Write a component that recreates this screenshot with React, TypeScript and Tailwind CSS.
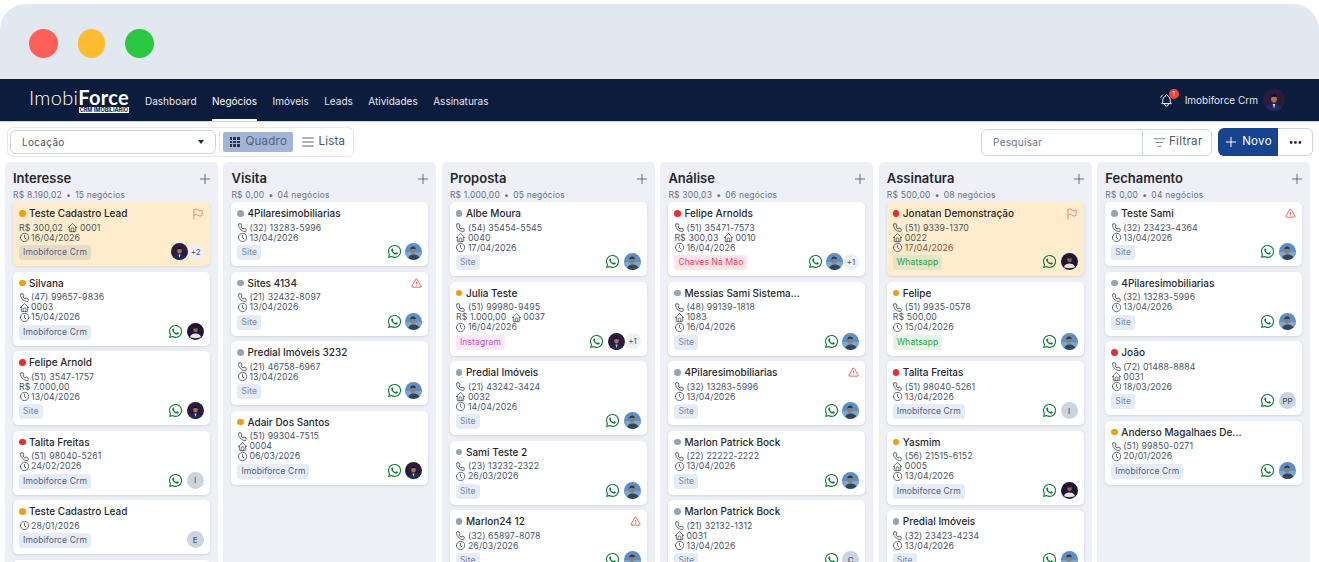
import React from 'react'
import { ListFilter } from 'lucide-react'
import { TbAlertTriangle, TbBellRinging, TbClock, TbDots, TbFlag, TbHome, TbMenu2, TbPhone, TbPlus } from 'react-icons/tb'
import { FaWhatsapp } from 'react-icons/fa'

type AvatarKind = 'man' | 'dark' | 'photo' | string

type Deal = {
  name: string
  dot: 'orange' | 'red' | 'gray'
  phone?: string
  value?: string
  code?: string
  date: string
  dateRed?: boolean
  tag: string
  hl?: boolean
  flag?: boolean
  alert?: boolean
  wa?: boolean
  avatar: AvatarKind
  extra?: string
}

type Column = { title: string; total: string; count: string; deals: Deal[] }

const columns: Column[] = [
  {
    title: 'Interesse',
    total: 'R$ 8.190,02',
    count: '15 negócios',
    deals: [
      { name: 'Teste Cadastro Lead', dot: 'orange', value: 'R$ 300,02', code: '0001', date: '16/04/2026', tag: 'Imobiforce Crm', hl: true, flag: true, avatar: 'man', extra: '+2' },
      { name: 'Silvana', dot: 'orange', phone: '(47) 99657-9836', code: '0003', date: '15/04/2026', tag: 'Imobiforce Crm', wa: true, avatar: 'dark' },
      { name: 'Felipe Arnold', dot: 'red', phone: '(51) 3547-1757', value: 'R$ 7.000,00', date: '13/04/2026', tag: 'Site', wa: true, avatar: 'man' },
      { name: 'Talita Freitas', dot: 'red', phone: '(51) 98040-5261', date: '24/02/2026', tag: 'Imobiforce Crm', wa: true, avatar: 'I' },
      { name: 'Teste Cadastro Lead', dot: 'orange', date: '28/01/2026', tag: 'Imobiforce Crm', avatar: 'E' },
      { name: '', dot: 'orange', date: '28/01/2026', tag: 'Site', avatar: 'E' },
    ],
  },
  {
    title: 'Visita',
    total: 'R$ 0,00',
    count: '04 negócios',
    deals: [
      { name: '4Pilaresimobiliarias', dot: 'gray', phone: '(32) 13283-5996', date: '13/04/2026', tag: 'Site', wa: true, avatar: 'photo' },
      { name: 'Sites 4134', dot: 'gray', phone: '(21) 32432-8097', date: '13/04/2026', tag: 'Site', alert: true, wa: true, avatar: 'photo' },
      { name: 'Predial Imóveis 3232', dot: 'gray', phone: '(21) 46758-6967', date: '13/04/2026', tag: 'Site', wa: true, avatar: 'photo' },
      { name: 'Adair Dos Santos', dot: 'orange', phone: '(51) 99304-7515', code: '0004', date: '06/03/2026', tag: 'Imobiforce Crm', wa: true, avatar: 'man' },
    ],
  },
  {
    title: 'Proposta',
    total: 'R$ 1.000,00',
    count: '05 negócios',
    deals: [
      { name: 'Albe Moura', dot: 'gray', phone: '(54) 35454-5545', code: '0040', date: '17/04/2026', tag: 'Site', wa: true, avatar: 'photo' },
      { name: 'Julia Teste', dot: 'orange', phone: '(51) 99980-9495', value: 'R$ 1.000,00', code: '0037', date: '16/04/2026', tag: 'Instagram', wa: true, avatar: 'man', extra: '+1' },
      { name: 'Predial Imóveis', dot: 'gray', phone: '(21) 43242-3424', code: '0032', date: '14/04/2026', tag: 'Site', wa: true, avatar: 'photo' },
      { name: 'Sami Teste 2', dot: 'gray', phone: '(23) 13232-2322', date: '26/03/2026', tag: 'Site', wa: true, avatar: 'photo' },
      { name: 'Marlon24 12', dot: 'gray', phone: '(32) 65897-8078', date: '26/03/2026', tag: 'Site', alert: true, wa: true, avatar: 'photo' },
    ],
  },
  {
    title: 'Análise',
    total: 'R$ 300,03',
    count: '06 negócios',
    deals: [
      { name: 'Felipe Arnolds', dot: 'red', phone: '(51) 35471-7573', value: 'R$ 300,03', code: '0010', date: '16/04/2026', tag: 'Chaves Na Mão', wa: true, avatar: 'photo', extra: '+1' },
      { name: 'Messias Sami Sistema...', dot: 'gray', phone: '(48) 99139-1818', code: '1083', date: '16/04/2026', tag: 'Site', wa: true, avatar: 'photo' },
      { name: '4Pilaresimobiliarias', dot: 'gray', phone: '(32) 13283-5996', date: '13/04/2026', tag: 'Site', alert: true, wa: true, avatar: 'photo' },
      { name: 'Marlon Patrick Bock', dot: 'gray', phone: '(22) 22222-2222', date: '13/04/2026', tag: 'Site', wa: true, avatar: 'photo' },
      { name: 'Marlon Patrick Bock', dot: 'gray', phone: '(21) 32132-1312', code: '0031', date: '13/04/2026', tag: 'Site', wa: true, avatar: 'C' },
    ],
  },
  {
    title: 'Assinatura',
    total: 'R$ 500,00',
    count: '08 negócios',
    deals: [
      { name: 'Jonatan Demonstração', dot: 'red', phone: '(51) 9339-1370', code: '0022', date: '17/04/2026', dateRed: true, tag: 'Whatsapp', hl: true, flag: true, wa: true, avatar: 'dark' },
      { name: 'Felipe', dot: 'orange', phone: '(51) 9935-0578', value: 'R$ 500,00', date: '15/04/2026', tag: 'Whatsapp', wa: true, avatar: 'photo' },
      { name: 'Talita Freitas', dot: 'red', phone: '(51) 98040-5261', date: '13/04/2026', tag: 'Imobiforce Crm', wa: true, avatar: 'I' },
      { name: 'Yasmim', dot: 'orange', phone: '(56) 21515-6152', code: '0005', date: '13/04/2026', tag: 'Imobiforce Crm', wa: true, avatar: 'dark' },
      { name: 'Predial Imóveis', dot: 'gray', phone: '(32) 23423-4234', date: '13/04/2026', tag: 'Site', wa: true, avatar: 'photo' },
    ],
  },
  {
    title: 'Fechamento',
    total: 'R$ 0,00',
    count: '04 negócios',
    deals: [
      { name: 'Teste Sami', dot: 'gray', phone: '(32) 23423-4364', date: '13/04/2026', tag: 'Site', alert: true, wa: true, avatar: 'photo' },
      { name: '4Pilaresimobiliarias', dot: 'gray', phone: '(32) 13283-5996', date: '13/04/2026', tag: 'Site', wa: true, avatar: 'photo' },
      { name: 'João', dot: 'red', phone: '(72) 01488-8884', code: '0031', date: '18/03/2026', tag: 'Site', wa: true, avatar: 'PP' },
      { name: 'Anderso Magalhaes De...', dot: 'orange', phone: '(51) 99850-0271', date: '20/01/2026', tag: 'Imobiforce Crm', wa: true, avatar: 'photo' },
    ],
  },
]

const dotClass = {
  orange: 'bg-[#f59e0b]',
  red: 'bg-[#ef2a2a]',
  gray: 'bg-[#94a3b8]',
}

function tagClass(tag: string, hl?: boolean) {
  if (tag === 'Whatsapp') return hl ? 'bg-[#e2e6c4] text-[#2f9e44]' : 'bg-[#e4f4e4] text-[#2f9e44]'
  if (tag === 'Instagram') return 'bg-[#fbe9f8] text-[#c84fc0]'
  if (tag === 'Chaves Na Mão') return 'bg-[#ffe4e8] text-[#f43f5e]'
  if (tag === 'Site') return 'bg-[#e7ecf4] text-[#6f88b3]'
  return hl ? 'bg-[#e6dcc6] text-[#4a6088]' : 'bg-[#e7ecf4] text-[#4a6088]'
}

// avatars are little drawings since there is no photo to use
function Avatar({ kind, size = 'w-[17px] h-[17px]' }: { kind: AvatarKind; size?: string }) {
  if (kind === 'man') {
    return (
      <svg viewBox="0 0 17 17" className={`${size} rounded-full shrink-0`}>
        <rect width="17" height="17" fill="#2b1c3d" />
        <path d="M2 17c0-4 3-5.5 6.5-5.5S15 13 15 17z" fill="#1d2a5c" />
        <path d="M7.5 11.5h2L8.5 15z" fill="#d9d4d4" />
        <ellipse cx="8.5" cy="7.5" rx="2.3" ry="3" fill="#a8705a" />
        <path d="M6.1 6.5c0-2 1-2.6 2.4-2.6s2.4.6 2.4 2.6c-1.5-.8-3.3-.8-4.8 0z" fill="#15101c" />
      </svg>
    )
  }
  if (kind === 'dark') {
    return (
      <svg viewBox="0 0 17 17" className={`${size} rounded-full shrink-0`}>
        <rect width="17" height="17" fill="#1f1636" />
        <path d="M3 14c1-3 3-3.5 5.5-3.5S13 11 14 14c-2 1.5-9 1.5-11 0z" fill="#e8e2e0" />
        <ellipse cx="8.5" cy="6.5" rx="2.2" ry="2.8" fill="#a0604e" />
        <path d="M6.3 5.5c.2-1.6 1.2-2 2.2-2s2 .4 2.2 2z" fill="#2a1a1a" />
      </svg>
    )
  }
  if (kind === 'photo') {
    return (
      <svg viewBox="0 0 17 17" className={`${size} rounded-full shrink-0`}>
        <rect width="17" height="17" fill="#5d8fc4" />
        <rect y="9" width="17" height="8" fill="#7fa6cc" />
        <path d="M3 17c0-4 2.5-5.5 5.5-5.5S15 13 15 17z" fill="#33465c" />
        <ellipse cx="8" cy="7.5" rx="2.7" ry="3.3" fill="#8a8078" />
        <path d="M5.3 6.5c0-2 1.2-3 2.9-3s2.5 1 2.5 2.8c-1.6-1-3.8-.8-5.4.2z" fill="#2e3540" />
      </svg>
    )
  }
  return (
    <div className="w-[17px] h-[17px] rounded-full bg-[#cbd5e1] flex items-center justify-center text-[8px] font-medium text-[#475569] shrink-0">
      {kind}
    </div>
  )
}

function Card({ deal }: { deal: Deal }) {
  const line = 'flex items-center h-[10px] text-[8.75px] leading-[10px] tracking-[0.1px] text-[#4b5563]'
  const icon = 'w-[11px] h-[11px] shrink-0 text-[#27303f] -ml-[0.5px]'
  return (
    <div
      className={`shrink-0 rounded-[5px] pt-[5.5px] px-[6px] pb-[6px] shadow-[0_1px_3px_rgba(15,23,42,0.12)] ${
        deal.hl ? 'bg-[#feeccd]' : 'bg-white'
      }`}
    >
      <div className="flex items-center h-[12px]">
        <span className={`w-[6.5px] h-[6.5px] rounded-full shrink-0 ${dotClass[deal.dot]}`} />
        <span className="ml-[3.5px] flex-1 text-[10px] font-medium text-[#27272a] whitespace-nowrap">{deal.name}</span>
        {deal.flag && <TbFlag className="w-[14px] h-[14px] text-[#f47c7c] -mr-[1px]" strokeWidth={1.5} />}
        {deal.alert && <TbAlertTriangle className="w-[11px] h-[11px] text-[#ef4444]" strokeWidth={1.75} />}
      </div>
      <div className="mt-[3px]">
        {deal.phone && (
          <div className={line}>
            <TbPhone className={icon} strokeWidth={1.5} />
            <span className="ml-[1.5px]">{deal.phone}</span>
          </div>
        )}
        {(deal.value || deal.code) && (
          <div className={line}>
            {deal.value && <span>{deal.value}</span>}
            {deal.code && (
              <>
                <TbHome className={deal.value ? 'w-[11px] h-[11px] shrink-0 text-[#27303f] ml-[4.5px]' : icon} strokeWidth={1.5} />
                <span className="ml-[1.5px]">{deal.code}</span>
              </>
            )}
          </div>
        )}
        <div className={line}>
          <TbClock className={icon} strokeWidth={1.5} />
          <span className={`ml-[1.5px] ${deal.dateRed ? 'text-[#9a4a35]' : ''}`}>{deal.date}</span>
        </div>
      </div>
      <div className="mt-[2.5px] flex items-center justify-between h-[15px]">
        <span className={`px-[4px] h-[15px] rounded-[3px] text-[8.5px] leading-[15px] tracking-[0.12px] whitespace-nowrap ${tagClass(deal.tag, deal.hl)}`}>
          {deal.tag}
        </span>
        <div className="flex items-center mb-[2px]">
          {deal.wa && <FaWhatsapp className="w-[15px] h-[15px] mr-[3.5px] text-[#0f7a34]" />}
          <Avatar kind={deal.avatar} />
          {deal.extra && (
            <div className="w-[16px] h-[16px] rounded-full bg-[#eef0f6] flex items-center justify-center text-[8px] text-[#475569]">
              {deal.extra}
            </div>
          )}
        </div>
      </div>
    </div>
  )
}

function ColumnView({ column }: { column: Column }) {
  return (
    <div className="bg-[#eef0f6] rounded-t-[5px] px-[8px] h-[400px] overflow-hidden">
      <div className="flex items-center justify-between h-[22px] mt-[6px]">
        <h2 className="text-[13px] font-semibold text-[#27272a]">{column.title}</h2>
        <TbPlus className="w-[16px] h-[16px] text-[#4b5563] -mr-[3px]" strokeWidth={1.25} />
      </div>
      <div className="h-[11px] text-[8.5px] leading-[11px] tracking-[0.2px] text-[#6b7280] mb-[1px] whitespace-nowrap">
        {column.total} <span className="mx-[1.5px]">•</span> {column.count}
      </div>
      <div className="flex flex-col gap-[5.5px]">
        {column.deals.map((d, i) => (
          <Card key={i} deal={d} />
        ))}
      </div>
    </div>
  )
}

export default function App() {
  return (
    <div className="h-[562px] w-[1319px] overflow-hidden bg-white font-['Inter',sans-serif]">
      {/* Browser frame */}
      <div className="mt-[4px] h-[75px] bg-[#e2e8f0] rounded-t-[26px] flex items-center gap-[20px] pl-[29px] pt-[3px]">
        <span className="w-[29px] h-[29px] rounded-full bg-[#ff5f57]" />
        <span className="w-[27px] h-[29px] rounded-full bg-[#febc2e]" />
        <span className="w-[29px] h-[29px] rounded-full bg-[#28c840]" />
      </div>

      {/* Nav */}
      <div className="h-[43px] bg-[#0b1c3c] border-b border-[#cbd5e1] flex items-center pl-[29px] pr-[34px]">
        <div className="w-[100px] mr-[16px] flex flex-col items-end -mt-[1px]">
          <div className="text-[20px] leading-[20px] text-white font-['Lato',sans-serif] font-light tracking-[0.3px] whitespace-nowrap">
            Imobi<span className="font-bold">Force</span>
          </div>
          <div className="bg-white text-[#0b1c3c] text-[5.5px] leading-[6px] font-bold px-[1px] whitespace-nowrap">CRM IMOBILIÁRIO</div>
        </div>
        <nav className="flex items-center h-full gap-[15.5px] text-[10px] text-[#e2e8f0] whitespace-nowrap pt-[2px]">
          <span>Dashboard</span>
          <span className="relative h-full flex items-center text-white">
            Negócios
            <span className="absolute left-0 right-0 bottom-0 h-[2px] bg-white" />
          </span>
          <span>Imóveis</span>
          <span>Leads</span>
          <span>Atividades</span>
          <span>Assinaturas</span>
        </nav>
        <div className="ml-auto flex items-center">
          <div className="relative">
            <TbBellRinging className="w-[15px] h-[15px] text-white" strokeWidth={1.5} />
            <span className="absolute -top-[4px] -right-[5px] w-[10px] h-[10px] rounded-full bg-[#ef4444] text-white text-[6px] leading-[10px] text-center">1</span>
          </div>
          <span className="ml-[11px] text-[10px] text-[#e2e8f0]">Imobiforce Crm</span>
          <div className="ml-[5px]">
            <Avatar kind="man" size="w-[22px] h-[22px]" />
          </div>
        </div>
      </div>

      {/* Toolbar */}
      <div className="h-[40px] flex items-center pl-[7px] pr-[6px]">
        <div className="h-[30px] w-[347px] border border-[#e2e8f0] rounded-[6px] flex items-center pl-[2px]">
          <div className="w-[206px] h-[24px] border border-[#cbd5e1] rounded-[6px] flex items-center justify-between pl-[11px] pr-[11px] text-[10px] tracking-[0.3px] text-[#4b5563]">
            Locação
            <span className="w-0 h-0 border-x-[3.5px] border-x-transparent border-t-[4px] border-t-[#1f2937]" />
          </div>
          <span className="ml-[2.5px] w-px h-[22px] bg-[#e2e8f0]" />
          <div className="ml-[3px] w-[70px] h-[20px] bg-[#a3b5d4] rounded-[2px] flex items-center pl-[7px] text-[#4f6284] text-[11.5px] tracking-[0.25px]">
            <span className="w-[10px] h-[10px] grid grid-cols-3 gap-[1px] mr-[6px]">
              {Array.from({ length: 9 }).map((_, i) => (
                <span key={i} className="bg-[#27364f]" />
              ))}
            </span>
            Quadro
          </div>
          <div className="ml-[7px] flex items-center text-[11.5px] tracking-[0.2px] text-[#4b5563]">
            <TbMenu2 className="w-[16px] h-[16px] mr-[3px] text-[#374151]" strokeWidth={1.25} />
            Lista
          </div>
        </div>
        <div className="ml-auto flex items-center">
          <div className="h-[27px] w-[231px] border border-[#cbd5e1] rounded-[6px] flex items-center">
            <div className="w-[161px] h-full border-r border-[#cbd5e1] flex items-center pl-[11px] text-[10px] tracking-[0.3px] text-[#6b7280]">
              Pesquisar
            </div>
            <div className="flex items-center pl-[10px] text-[11.5px] tracking-[0.3px] text-[#4b5563]">
              <ListFilter className="w-[13px] h-[13px] mr-[3px] text-[#4b5563]" strokeWidth={1.25} />
              Filtrar
            </div>
          </div>
          <div className="ml-[6px] flex h-[28px]">
            <div className="w-[60px] bg-[#17438f] rounded-l-[6px] flex items-center justify-center text-[11.5px] tracking-[0.3px] text-white pr-[1px]">
              <TbPlus className="w-[16px] h-[16px] mr-[3px]" strokeWidth={1.5} />
              Novo
            </div>
            <div className="w-[35px] border border-l-0 border-[#cbd5e1] rounded-r-[6px] flex items-center justify-center">
              <TbDots className="w-[15px] h-[15px] text-[#1f2937]" strokeWidth={2.5} />
            </div>
          </div>
        </div>
      </div>

      {/* Board */}
      <div className="grid grid-cols-6 gap-[5.8px] pl-[5px] pr-[9px]">
        {columns.map((c) => (
          <ColumnView key={c.title} column={c} />
        ))}
      </div>
    </div>
  )
}
